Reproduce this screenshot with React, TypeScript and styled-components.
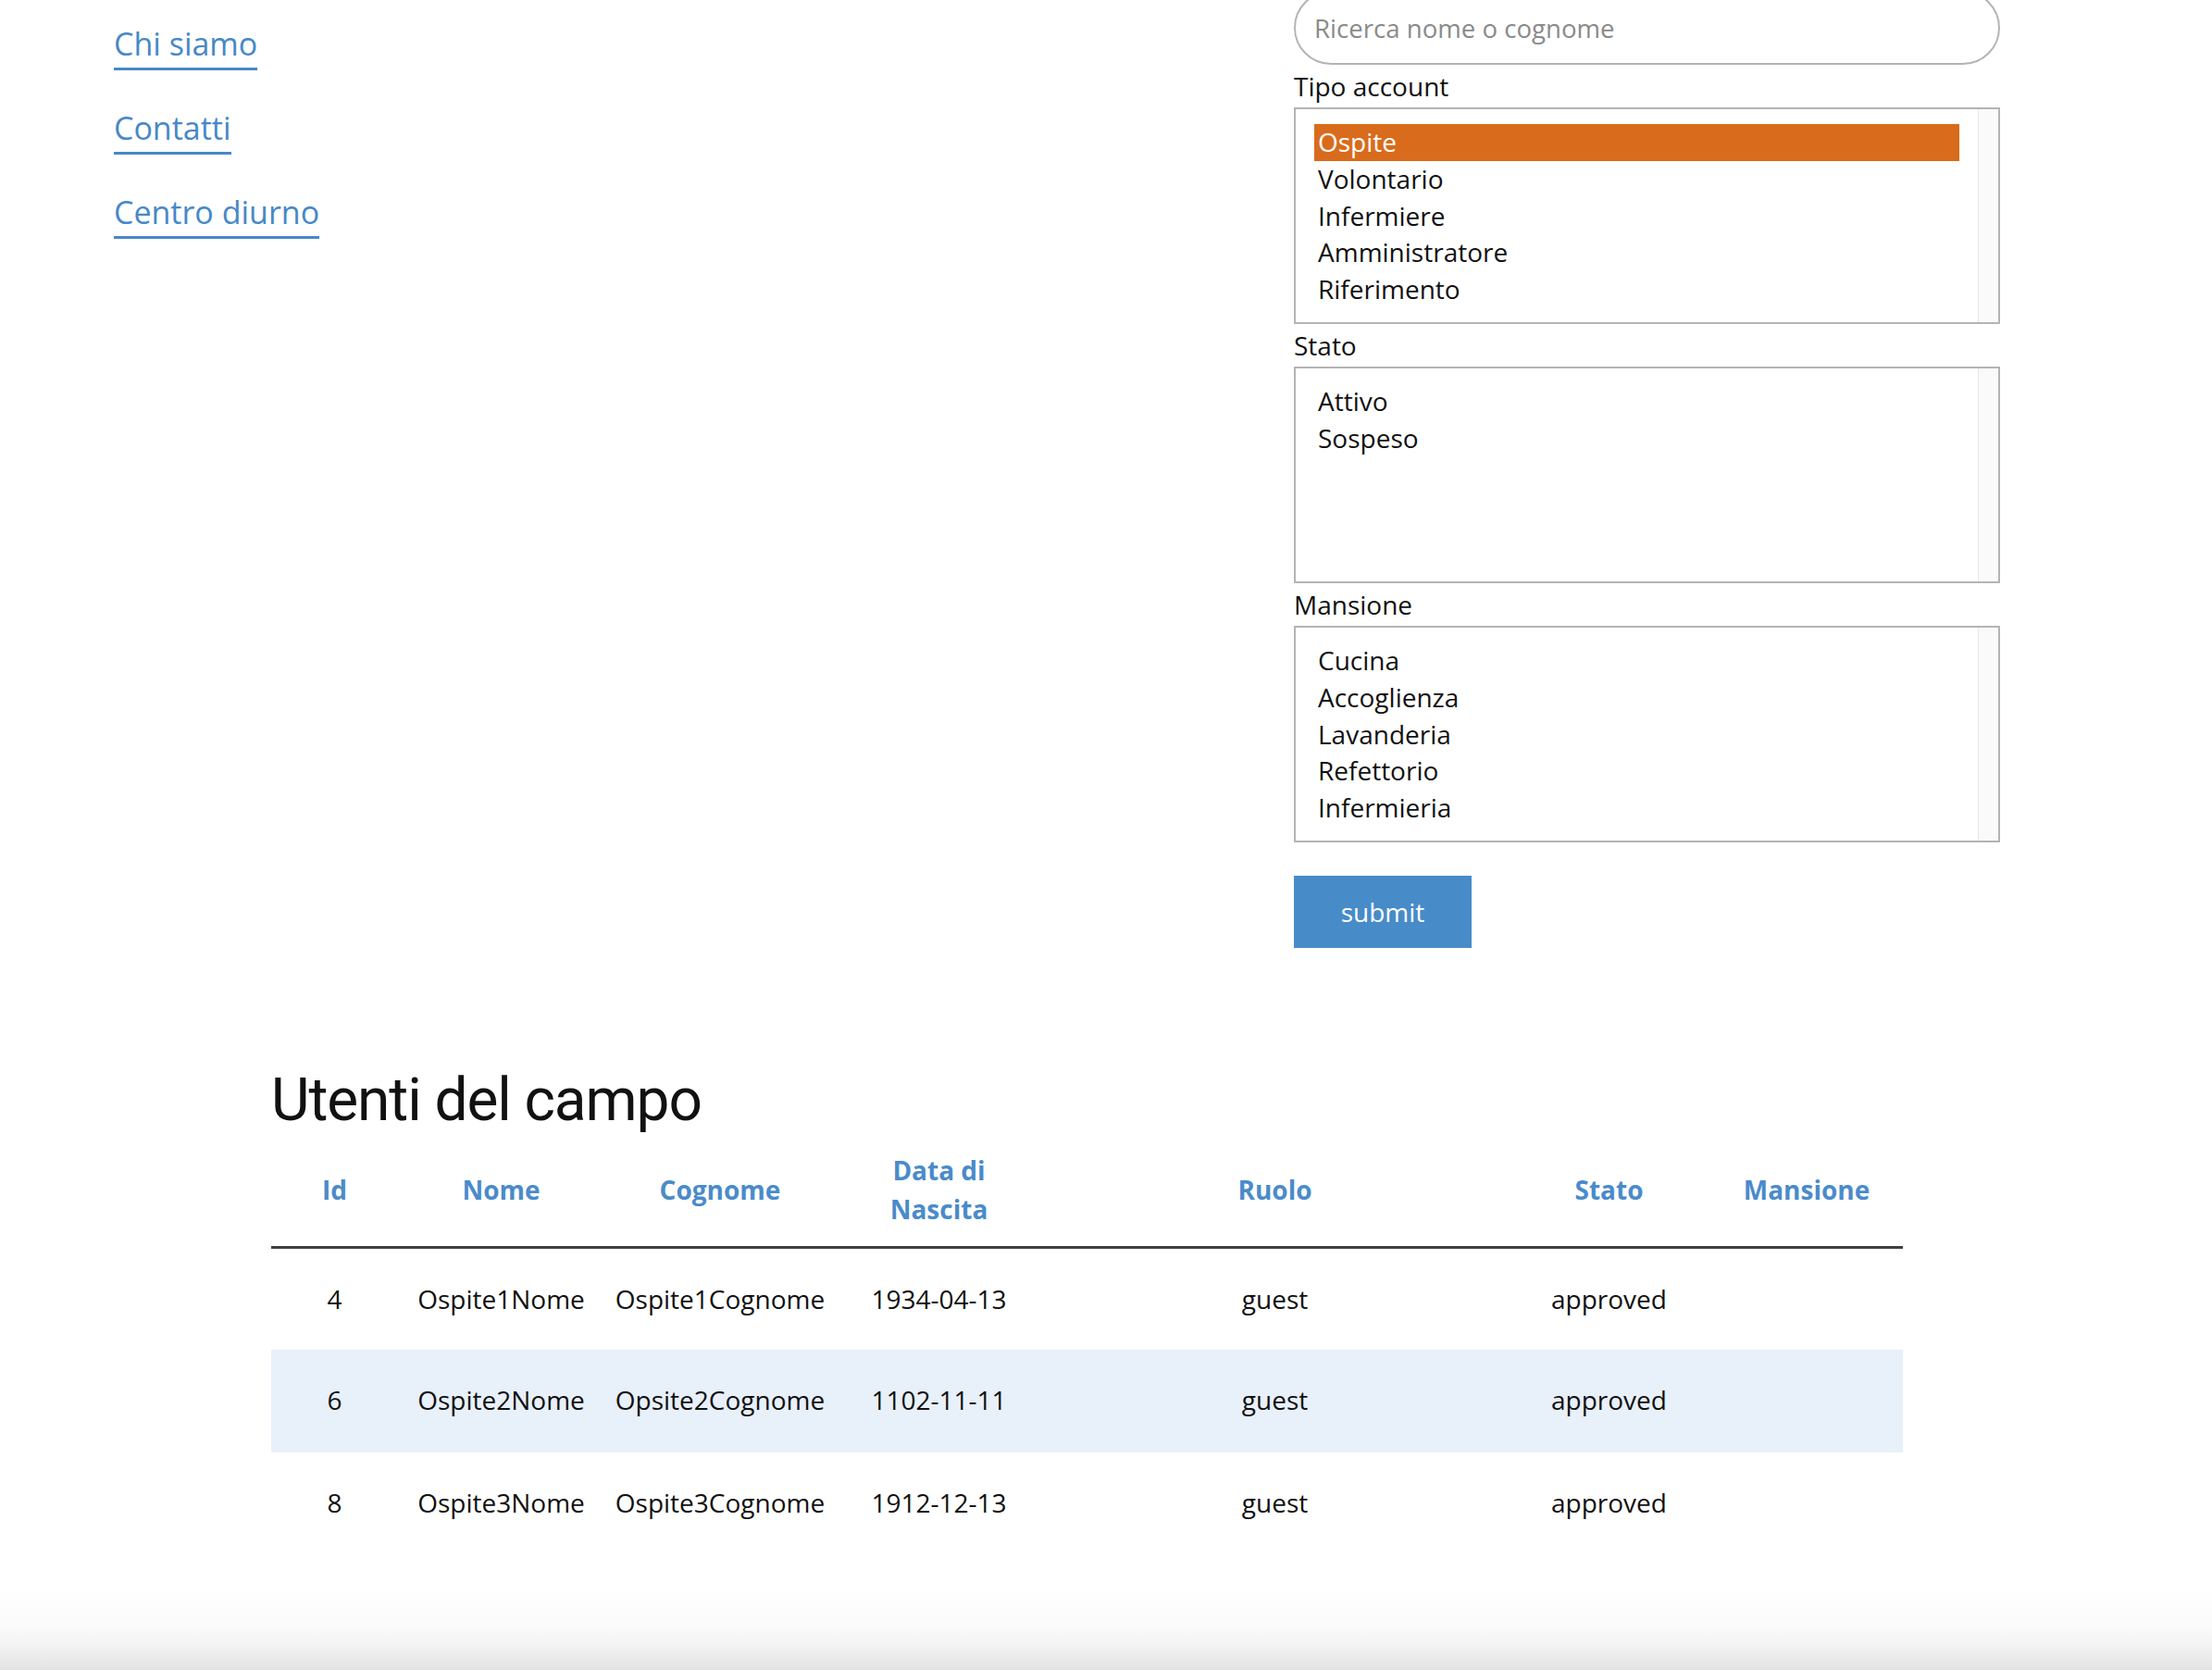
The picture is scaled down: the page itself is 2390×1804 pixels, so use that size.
import React from "react";
import styled, { createGlobalStyle } from "styled-components";

const GlobalStyle = createGlobalStyle`
  html, body {
    margin: 0;
    padding: 0;
    background: #ffffff;
  }
  body {
    font-family: "Open Sans", "Noto Sans", sans-serif;
    color: #111111;
  }
  * { box-sizing: border-box; }
`;

const Page = styled.div`
  min-height: 100vh;
  display: flex;
  flex-direction: column;
  overflow: hidden;
`;

const TopSection = styled.div`
  display: grid;
  grid-template-columns: 1fr 763px;
  padding: 0 229px 0 123px;
`;

const Nav = styled.nav`
  display: flex;
  flex-direction: column;
  align-items: flex-start;
  gap: 39px;
  padding-top: 24px;
`;

const NavLink = styled.a`
  font-size: 34px;
  line-height: normal;
  color: #4788c7;
  text-decoration: none;
  padding-bottom: 3px;
  border-bottom: 3px solid #4788c7;
`;

const FilterForm = styled.form`
  display: flex;
  flex-direction: column;
  margin-top: -10px;
`;

const SearchInput = styled.input`
  height: 80px;
  width: 100%;
  border: 2px solid #b4b4b4;
  border-radius: 40px;
  padding: 0 20px;
  font-family: "Open Sans", sans-serif;
  font-size: 27.6px;
  color: #111;
  outline: none;
  &::placeholder {
    color: #8a8a8a;
  }
`;

const FieldLabel = styled.label`
  display: block;
  font-size: 28px;
  line-height: 36px;
  margin: 5px 0;
  color: #111;
`;

const ListBox = styled.div`
  display: flex;
  height: 234px;
  overflow: hidden;
  border: 2px solid #b4b4b4;
  background: #fff;
`;

const OptionList = styled.div`
  flex: 1;
  padding: 16px 20px 0;
  display: flex;
  flex-direction: column;
`;

const OptionItem = styled.div<{ $selected?: boolean }>`
  flex-shrink: 0;
  height: 39.8px;
  line-height: 39.8px;
  padding: 0 4px;
  font-size: 28px;
  color: ${(p) => (p.$selected ? "#ffffff" : "#111111")};
  background: ${(p) => (p.$selected ? "#d96b1c" : "transparent")};
`;

const ScrollTrack = styled.div`
  width: 22px;
  background: #fafafa;
  border-left: 1px solid #e6e6e6;
`;

const SubmitButton = styled.button`
  margin-top: 36px;
  width: 192px;
  height: 78px;
  border: none;
  background: #478bc9;
  color: #ffffff;
  font-family: "Open Sans", sans-serif;
  font-size: 28px;
  line-height: 1;
  cursor: pointer;
`;

const UsersSection = styled.section`
  padding: 127px 0 0 293px;
  width: 2056px;
`;

const Heading = styled.h2`
  margin: 0;
  font-family: Roboto, "Liberation Sans", sans-serif;
  font-weight: 400;
  font-size: 64px;
  line-height: normal;
  letter-spacing: -1.1px;
  color: #111;
`;

const Table = styled.table`
  width: 1763px;
  border-collapse: collapse;
  table-layout: fixed;
`;

const Col = styled.col<{ $width: number }>`
  width: ${(p) => p.$width}px;
`;

const HeadCell = styled.th`
  padding: 17px 0 19px;
  font-size: 28px;
  font-weight: 700;
  line-height: 42px;
  color: #4a8bca;
  text-align: center;
  vertical-align: middle;
  border-bottom: 3px solid #404040;
`;

const Row = styled.tr<{ $striped?: boolean }>`
  background: ${(p) => (p.$striped ? "#e8f0fa" : "transparent")};
`;

const Cell = styled.td`
  height: 110.5px;
  padding: 0 0 2px;
  font-size: 28px;
  line-height: 42px;
  text-align: center;
  vertical-align: middle;
  color: #111;
  white-space: nowrap;
`;

const BottomFade = styled.div`
  margin-top: auto;
  height: 90px;
  flex-shrink: 0;
  background: linear-gradient(
    to bottom,
    rgba(255, 255, 255, 0) 0%,
    #fbfbfb 45%,
    #f3f3f3 70%,
    #e3e3e3 100%
  );
`;

const tipi = ["Ospite", "Volontario", "Infermiere", "Amministratore", "Riferimento"];
const stati = ["Attivo", "Sospeso"];
const mansioni = ["Cucina", "Accoglienza", "Lavanderia", "Refettorio", "Infermieria"];

const columns = [
  { label: "Id", width: 137 },
  { label: "Nome", width: 223 },
  { label: "Cognome", width: 250 },
  { label: "Data di Nascita", width: 223 },
  { label: "Ruolo", width: 503 },
  { label: "Stato", width: 219 },
  { label: "Mansione", width: 208 },
];

const users = [
  { id: 4, nome: "Ospite1Nome", cognome: "Ospite1Cognome", nascita: "1934-04-13", ruolo: "guest", stato: "approved", mansione: "" },
  { id: 6, nome: "Ospite2Nome", cognome: "Opsite2Cognome", nascita: "1102-11-11", ruolo: "guest", stato: "approved", mansione: "" },
  { id: 8, nome: "Ospite3Nome", cognome: "Ospite3Cognome", nascita: "1912-12-13", ruolo: "guest", stato: "approved", mansione: "" },
];

function Listbox({ items, selected }: { items: string[]; selected?: string }) {
  return (
    <ListBox role="listbox">
      <OptionList>
        {items.map((it) => (
          <OptionItem key={it} $selected={it === selected} role="option">
            {it}
          </OptionItem>
        ))}
      </OptionList>
      <ScrollTrack />
    </ListBox>
  );
}

export default function App() {
  return (
    <Page>
      <GlobalStyle />
      <TopSection>
        <Nav>
          <NavLink href="#">Chi siamo</NavLink>
          <NavLink href="#">Contatti</NavLink>
          <NavLink href="#">Centro diurno</NavLink>
        </Nav>
        <FilterForm onSubmit={(e) => e.preventDefault()}>
          <SearchInput placeholder="Ricerca nome o cognome" />
          <FieldLabel>Tipo account</FieldLabel>
          <Listbox items={tipi} selected="Ospite" />
          <FieldLabel>Stato</FieldLabel>
          <Listbox items={stati} />
          <FieldLabel>Mansione</FieldLabel>
          <Listbox items={mansioni} />
          <SubmitButton type="submit">submit</SubmitButton>
        </FilterForm>
      </TopSection>
      <UsersSection>
        <Heading>Utenti del campo</Heading>
        <Table>
          <colgroup>
            {columns.map((c) => (
              <Col key={c.label} $width={c.width} />
            ))}
          </colgroup>
          <thead>
            <tr>
              {columns.map((c) => (
                <HeadCell key={c.label}>
                  {c.label === "Data di Nascita" ? (
                    <>
                      Data di
                      <br />
                      Nascita
                    </>
                  ) : (
                    c.label
                  )}
                </HeadCell>
              ))}
            </tr>
          </thead>
          <tbody>
            {users.map((u, i) => (
              <Row key={u.id} $striped={i % 2 === 1}>
                <Cell>{u.id}</Cell>
                <Cell>{u.nome}</Cell>
                <Cell>{u.cognome}</Cell>
                <Cell>{u.nascita}</Cell>
                <Cell>{u.ruolo}</Cell>
                <Cell>{u.stato}</Cell>
                <Cell>{u.mansione}</Cell>
              </Row>
            ))}
          </tbody>
        </Table>
      </UsersSection>
      <BottomFade />
    </Page>
  );
}
